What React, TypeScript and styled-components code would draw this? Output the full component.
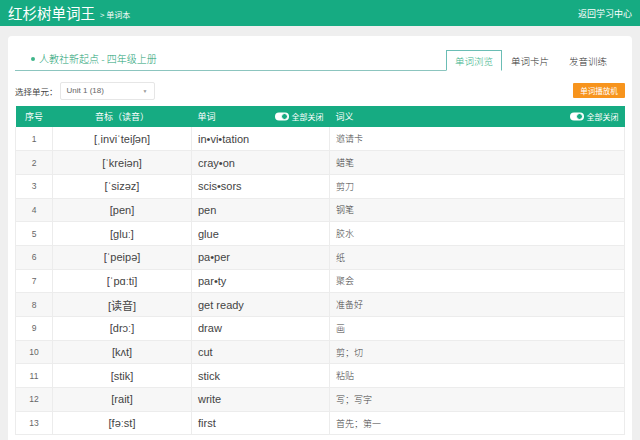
import styled, { createGlobalStyle } from "styled-components";

const GREEN = "#16ab82";

const GlobalStyle = createGlobalStyle`
  body {
    margin: 0;
    background: #efefef;
    font-family: "Noto Sans CJK SC", "Liberation Sans", sans-serif;
    color: #333;
  }
`;

const Header = styled.div`
  height: 26px;
  background: ${GREEN};
  display: flex;
  align-items: center;
  justify-content: space-between;
  padding: 0 8px;
  color: #fff;
`;

const Brand = styled.div`
  display: flex;
  align-items: center;
  gap: 5px;
`;

const Logo = styled.span`
  font-size: 14.5px;
  line-height: 1;
`;

const Crumb = styled.span`
  font-size: 8px;
  padding-top: 3px;
`;

const BackLink = styled.span`
  font-size: 9px;
`;

const Main = styled.div`
  padding: 10px 8px 0;
`;

const Card = styled.div`
  background: #fff;
  border-radius: 4px;
  padding: 13px 7px 0;
  height: 420px;
  overflow: hidden;
`;

const TopBar = styled.div`
  display: flex;
  justify-content: space-between;
  align-items: flex-end;
  height: 21px;
  border-bottom: 1px solid #8cc5bf;
`;

const BookTitle = styled.div`
  padding: 0 0 4px 16px;
  font-size: 10px;
  font-weight: 300;
  color: #1aa173;
  display: flex;
  align-items: center;
  gap: 4px;
  &::before {
    content: "";
    width: 4px;
    height: 4px;
    border-radius: 50%;
    background: #3fb58a;
  }
`;

const Tabs = styled.div`
  display: flex;
  align-items: flex-end;
  height: 100%;
`;

const Tab = styled.div<{ $active?: boolean }>`
  height: 21px;
  box-sizing: border-box;
  padding: 0 ${(p) => (p.$active ? "8px" : "9px")};
  font-size: 9.5px;
  font-weight: 300;
  line-height: 20px;
  color: ${(p) => (p.$active ? "#3bb38a" : "#333")};
  border: 1px solid ${(p) => (p.$active ? "#6bbdb5" : "transparent")};
  border-bottom: ${(p) => (p.$active ? "1px solid #fff" : "none")};
  background: #fff;
  margin-bottom: -1px;
  & + & {
    padding-left: 8px;
  }
  & + & + & {
    padding-left: 9px;
    padding-right: 17px;
  }
`;

const Toolbar = styled.div`
  display: flex;
  justify-content: space-between;
  align-items: center;
  margin-top: 10px;
  height: 19px;
`;

const UnitPicker = styled.div`
  display: flex;
  align-items: center;
  font-size: 8.5px;
  color: #444;
`;

const Select = styled.div`
  width: 95px;
  height: 18px;
  box-sizing: border-box;
  border: 1px solid #e6e6e6;
  border-radius: 2px;
  margin-left: 2px;
  padding: 0 6px;
  display: flex;
  align-items: center;
  justify-content: space-between;
  font-family: "Liberation Sans", sans-serif;
  font-size: 8px;
  color: #666;
`;

const Caret = styled.span`
  font-size: 5px;
  color: #999;
`;

const PlayerButton = styled.button`
  width: 52px;
  height: 15px;
  border: 0;
  border-radius: 1px;
  background: #f7941d;
  color: #fff;
  font-family: "Noto Sans CJK SC", sans-serif;
  font-size: 7.5px;
  padding: 0;
`;

const Table = styled.table`
  margin-top: 6px;
  width: 100%;
  border-collapse: collapse;
  table-layout: fixed;
`;

const HeadCell = styled.th<{ $align?: string }>`
  background: ${GREEN};
  color: #fff;
  font-weight: normal;
  font-size: 9px;
  height: 21px;
  padding: 0 ${(p) => (p.$align === "left" ? "6px" : "0")};
  text-align: ${(p) => p.$align || "center"};
`;

const HeadInner = styled.div`
  display: flex;
  align-items: center;
  justify-content: space-between;
`;

const SwitchLabel = styled.span`
  display: flex;
  align-items: center;
  gap: 3px;
  font-size: 8px;
`;

const Row = styled.tr<{ $even: boolean }>`
  background: ${(p) => (p.$even ? "#f7f7f7" : "#fff")};
  height: 23.7px;
`;

const Cell = styled.td<{ $kind: "num" | "ipa" | "word" | "mean" }>`
  border: 1px solid #ececec;
  border-top: 0;
  padding: 0 ${(p) => (p.$kind === "word" || p.$kind === "mean" ? "6px" : "0")};
  text-align: ${(p) => (p.$kind === "num" || p.$kind === "ipa" ? "center" : "left")};
  font-family: ${(p) =>
    p.$kind === "mean"
      ? `"Noto Sans CJK SC", sans-serif`
      : `"Liberation Sans", "Noto Sans CJK SC", sans-serif`};
  font-weight: ${(p) => (p.$kind === "mean" ? 300 : 400)};
  font-size: ${(p) => (p.$kind === "num" ? "8.5px" : p.$kind === "mean" ? "9px" : "11px")};
  color: ${(p) => (p.$kind === "num" ? "#666" : "#444")};
`;

function Toggle() {
  return (
    <svg width="14" height="9" viewBox="0 0 14 9">
      <rect x="0" y="0.5" width="14" height="8" rx="4" fill="#fff" />
      <circle cx="9.5" cy="4.5" r="3" fill={GREEN} stroke="#fff" strokeWidth="1" />
    </svg>
  );
}

const words: [string, string, string][] = [
  ["[ˌinviˈteiʃən]", "in•vi•tation", "邀请卡"],
  ["[ˈkreiən]", "cray•on", "蜡笔"],
  ["[ˈsizəz]", "scis•sors", "剪刀"],
  ["[pen]", "pen", "钢笔"],
  ["[gluː]", "glue", "胶水"],
  ["[ˈpeipə]", "pa•per", "纸"],
  ["[ˈpɑːti]", "par•ty", "聚会"],
  ["[读音]", "get ready", "准备好"],
  ["[drɔː]", "draw", "画"],
  ["[kʌt]", "cut", "剪；切"],
  ["[stik]", "stick", "粘贴"],
  ["[rait]", "write", "写；写字"],
  ["[fəːst]", "first", "首先；第一"],
];

export default function App() {
  return (
    <>
      <GlobalStyle />
      <Header>
        <Brand>
          <Logo>红杉树单词王</Logo>
          <Crumb>&gt; 单词本</Crumb>
        </Brand>
        <BackLink>返回学习中心</BackLink>
      </Header>
      <Main>
        <Card>
          <TopBar>
            <BookTitle>人教社新起点 - 四年级上册</BookTitle>
            <Tabs>
              <Tab $active>单词浏览</Tab>
              <Tab>单词卡片</Tab>
              <Tab>发音训练</Tab>
            </Tabs>
          </TopBar>
          <Toolbar>
            <UnitPicker>
              选择单元：
              <Select>
                Unit 1 (18)
                <Caret>▼</Caret>
              </Select>
            </UnitPicker>
            <PlayerButton>单词播放机</PlayerButton>
          </Toolbar>
          <Table>
            <colgroup>
              <col style={{ width: 37 }} />
              <col style={{ width: 139 }} />
              <col style={{ width: 138 }} />
              <col />
            </colgroup>
            <thead>
              <tr>
                <HeadCell>序号</HeadCell>
                <HeadCell>音标（读音）</HeadCell>
                <HeadCell $align="left">
                  <HeadInner>
                    单词
                    <SwitchLabel>
                      <Toggle />
                      全部关闭
                    </SwitchLabel>
                  </HeadInner>
                </HeadCell>
                <HeadCell $align="left">
                  <HeadInner>
                    词义
                    <SwitchLabel>
                      <Toggle />
                      全部关闭
                    </SwitchLabel>
                  </HeadInner>
                </HeadCell>
              </tr>
            </thead>
            <tbody>
              {words.map(([ipa, word, mean], i) => (
                <Row key={word} $even={i % 2 === 1}>
                  <Cell $kind="num">{i + 1}</Cell>
                  <Cell $kind="ipa">{ipa}</Cell>
                  <Cell $kind="word">{word}</Cell>
                  <Cell $kind="mean">{mean}</Cell>
                </Row>
              ))}
            </tbody>
          </Table>
        </Card>
      </Main>
    </>
  );
}
